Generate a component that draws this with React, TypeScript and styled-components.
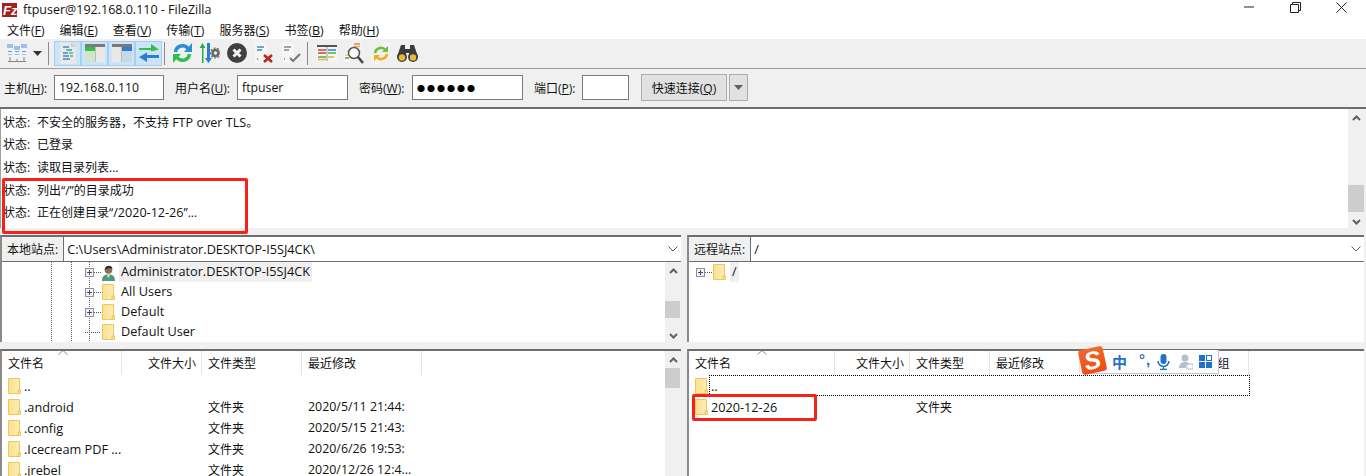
import React from "react";
import styled, { createGlobalStyle } from "styled-components";

const GlobalStyle = createGlobalStyle`
  html, body {
    margin: 0;
    height: 476px;
    overflow: hidden;
    background: #f0f0f0;
  }
  body {
    font-family: "Open Sans", "Noto Sans CJK SC", sans-serif;
    font-size: 12px;
    color: #111;
  }
  * { box-sizing: border-box; }
`;

const Window = styled.div`
  position: relative;
  width: 1366px;
  height: 476px;
  overflow: hidden;
  display: flex;
  flex-direction: column;
`;

/* latin runs are a touch wider than the cjk ones at this size */
const Latin = styled.span`
  font-size: 12.6px;
`;

/* title bar */
const TitleBar = styled.div`
  height: 20px;
  background: #fff;
  display: flex;
  align-items: center;
  padding: 0 2px 0 2px;
  font-size: 12.5px;
`;
const TitleText = styled.span`
  margin-left: 6px;
  flex: 1;
`;
const WinButton = styled.div`
  width: 46px;
  height: 20px;
  display: flex;
  align-items: center;
  justify-content: center;
  margin-top: -5px;
`;

/* menu */
const MenuBar = styled.div`
  height: 19px;
  background: #fff;
  display: flex;
  gap: 15px;
  padding: 2px 0 0 7px;
  align-items: center;
`;
const MenuItem = styled.span`
  font-size: 12px;
  u {
    font-size: 12.6px;
    text-underline-offset: 1px;
  }
`;

/* toolbar */
const Toolbar = styled.div`
  height: 30px;
  background: #f0f0f0;
  border-bottom: 1px solid #a0a0a0;
  display: flex;
  align-items: flex-start;
  padding: 2px 0 0 3px;
`;
const Tool = styled.div<{ $active?: boolean; $w?: number }>`
  width: ${(p) => p.$w ?? 27}px;
  height: 25px;
  display: flex;
  align-items: center;
  justify-content: center;
  flex-shrink: 0;
  background: ${(p) => (p.$active ? "#cce4f7" : "transparent")};
  border: 1px solid ${(p) => (p.$active ? "#a5cff0" : "transparent")};
`;
const ToolSep = styled.div<{ $l: number; $r: number }>`
  width: 1px;
  height: 23px;
  margin: 1px ${(p) => p.$r}px 0 ${(p) => p.$l}px;
  background: #8a8a8a;
  flex-shrink: 0;
`;

/* quick connect */
const QuickBar = styled.div`
  height: 41px;
  background: #f0f0f0;
  border-bottom: 2px solid #6e6e6e;
  display: flex;
  align-items: center;
  padding: 0 0 0 4px;
`;
const QuickLabel = styled.span<{ $w: number }>`
  width: ${(p) => p.$w}px;
  flex-shrink: 0;
  white-space: nowrap;
`;
const Field = styled.div<{ $w: number; $gap: number }>`
  width: ${(p) => p.$w}px;
  height: 25px;
  margin-right: ${(p) => p.$gap}px;
  flex-shrink: 0;
  background: #fff;
  border: 1px solid #7a7a7a;
  padding-left: 4px;
  line-height: 23px;
  font-size: 12.3px;
`;
const Dots = styled.span`
  font-size: 8px;
  letter-spacing: 2px;
  color: #000;
`;
const QuickButton = styled.div`
  width: 86px;
  height: 27px;
  background: #e1e1e1;
  border: 1px solid #adadad;
  display: flex;
  align-items: center;
  justify-content: center;
`;
const QuickArrow = styled.div`
  width: 19px;
  height: 27px;
  margin-left: 2px;
  background: #e1e1e1;
  border: 1px solid #adadad;
  display: flex;
  align-items: center;
  justify-content: center;
`;

/* message log */
const Log = styled.div`
  height: 120px;
  margin-right: 1px;
  background: #fff;
  display: flex;
  border-left: 1px solid #a0a0a0;
`;
const LogLines = styled.div`
  flex: 1;
  padding: 1px 0 0 2px;
`;
const LogLine = styled.div`
  height: 22.7px;
  display: flex;
  align-items: center;
`;
const LogKey = styled.span`
  width: 34px;
  flex-shrink: 0;
`;
const ScrollTrack = styled.div<{ $w: number; $thumbTop: number; $thumbH: number; $bottom?: number }>`
  position: relative;
  width: ${(p) => p.$w}px;
  flex-shrink: 0;
  background: #f0f0f0;
  display: flex;
  flex-direction: column;
  justify-content: space-between;
  align-items: center;
  padding: 6px 0 ${(p) => p.$bottom ?? 3}px;
  &::after {
    content: "";
    position: absolute;
    left: 0;
    width: ${(p) => p.$w - 1}px;
    top: ${(p) => p.$thumbTop}px;
    height: ${(p) => p.$thumbH}px;
    background: #cdcdcd;
  }
`;

/* panes */
const Splitter = styled.div`
  height: 7px;
  background: #f0f0f0;
  flex-shrink: 0;
`;
const PaneRow = styled.div<{ $h: number }>`
  display: flex;
  gap: 6px;
  flex-shrink: 0;
  height: ${(p) => p.$h}px;
`;
const Pane = styled.div<{ $w: number }>`
  width: ${(p) => p.$w}px;
  height: 100%;
  flex-shrink: 0;
  display: flex;
  flex-direction: column;
  background: #fff;
  border-top: 2px solid #6e6e6e;
  border-left: 2px solid #8a8a8a;
  overflow: hidden;
`;
const SiteBar = styled.div`
  height: 25px;
  display: flex;
  align-items: center;
  border-bottom: 1px solid #6e6e6e;
  flex-shrink: 0;
`;
const SiteLabel = styled.div`
  height: 100%;
  padding: 0 5px;
  background: #f0f0f0;
  border-right: 1px solid #6e6e6e;
  display: flex;
  align-items: center;
  white-space: nowrap;
`;
const SitePath = styled.div`
  flex: 1;
  padding-left: 3px;
  font-size: 12.7px;
`;
const Chevron = styled.div`
  width: 17px;
  display: flex;
  justify-content: center;
`;
const PaneBody = styled.div`
  flex: 1;
  display: flex;
  min-height: 0;
`;
const Tree = styled.div<{ $guides?: boolean; $indent: number }>`
  flex: 1;
  padding: 0 0 0 ${(p) => p.$indent}px;
  background-image: ${(p) =>
    p.$guides
      ? `repeating-linear-gradient(#555 0 1px, transparent 1px 2px),
         repeating-linear-gradient(#555 0 1px, transparent 1px 2px),
         repeating-linear-gradient(#555 0 1px, transparent 1px 2px)`
      : "none"};
  background-size: 1px 100%;
  background-position: 49px 0, 69px 0, 87px 0;
  background-repeat: no-repeat;
`;
const TreeRow = styled.div`
  height: 20px;
  display: flex;
  align-items: center;
`;
const Expander = styled.div`
  width: 9px;
  height: 9px;
  border: 1px solid #8e8f8f;
  background: #f4f4f4;
  position: relative;
  flex-shrink: 0;
  &::before {
    content: "";
    position: absolute;
    left: 1px;
    top: 3px;
    width: 5px;
    height: 1px;
    background: #3a4a8a;
  }
  &::after {
    content: "";
    position: absolute;
    left: 3px;
    top: 1px;
    width: 1px;
    height: 5px;
    background: #3a4a8a;
  }
`;
const Connector = styled.div<{ $w: number }>`
  width: ${(p) => p.$w}px;
  height: 1px;
  margin-right: 1px;
  flex-shrink: 0;
  background-image: repeating-linear-gradient(90deg, #555 0 1px, transparent 1px 2px);
`;
const TreeLabel = styled.span<{ $selected?: boolean }>`
  margin-left: 4px;
  padding: 0 2px;
  height: 20px;
  line-height: 19px;
  font-size: 12.7px;
  background: ${(p) => (p.$selected ? "#f0f0f0" : "transparent")};
`;

/* file lists */
const ListArea = styled.div`
  flex: 1;
  min-width: 0;
  position: relative;
`;
const HeaderRow = styled.div`
  height: 24px;
  display: flex;
  flex-shrink: 0;
`;
const HeaderCell = styled.div<{ $w: number; $right?: boolean }>`
  width: ${(p) => p.$w}px;
  height: 24px;
  flex-shrink: 0;
  border-right: 1px solid #e5e5e5;
  padding: 0 5px 0 6px;
  display: flex;
  align-items: center;
  justify-content: ${(p) => (p.$right ? "flex-end" : "flex-start")};
  white-space: nowrap;
  overflow: hidden;
`;
const SortMark = styled.div<{ $left: number }>`
  position: absolute;
  top: -1px;
  left: ${(p) => p.$left}px;
  line-height: 0;
`;
const FileRow = styled.div`
  height: 21px;
  display: flex;
  align-items: center;
  position: relative;
`;
const FocusBox = styled.div`
  position: absolute;
  left: 20px;
  top: 0;
  width: 541px;
  height: 21px;
  border: 1px dotted #000;
`;
const FileCell = styled.div<{ $w: number }>`
  width: ${(p) => p.$w}px;
  flex-shrink: 0;
  padding-left: 6px;
  display: flex;
  align-items: center;
  white-space: nowrap;
  overflow: hidden;
`;
const DateCell = styled(FileCell)`
  font-size: 12.4px;
`;
const FileName = styled.span`
  margin-left: 3px;
  font-size: 12.7px;
`;

/* overlays */
const RedBox = styled.div<{ $x: number; $y: number; $w: number; $h: number }>`
  position: absolute;
  left: ${(p) => p.$x}px;
  top: ${(p) => p.$y}px;
  width: ${(p) => p.$w}px;
  height: ${(p) => p.$h}px;
  border: 3px solid #f8201a;
  border-radius: 2px;
`;
const ImeBar = styled.div`
  position: absolute;
  left: 1091px;
  top: 350px;
  width: 128px;
  height: 24px;
  background: #fff;
  border: 1px solid #c3c7cf;
  border-top: none;
  display: flex;
  align-items: center;
  padding-left: 20px;
  color: #1d72c9;
`;
const ImeLogo = styled.div`
  position: absolute;
  left: 1080px;
  top: 348px;
  width: 25px;
  height: 25px;
  border-radius: 3px;
  background: linear-gradient(#ef6a2a, #f04a12);
  transform: rotate(-12deg);
  color: #fff;
  font: italic 900 25px/24px "Liberation Sans", sans-serif;
  text-align: center;
`;
const ImeZh = styled.span`
  font: 700 15px/1 "Noto Sans CJK SC", sans-serif;
  width: 27px;
`;
const ImePunct = styled.span`
  width: 18px;
  font: 700 15px/1 "Liberation Sans", sans-serif;
  letter-spacing: 1px;
  margin-top: -4px;
`;
const ImeSlot = styled.span<{ $after: number }>`
  display: flex;
  margin-right: ${(p) => p.$after}px;
`;

/* drawn icons */
const Folder = () => (
  <svg width="13" height="16" viewBox="0 0 13 16">
    <defs>
      <linearGradient id="fld" x1="0" x2="1" y1="0" y2="0">
        <stop offset="0" stopColor="#fbe08e" />
        <stop offset="1" stopColor="#fdeeb9" />
      </linearGradient>
    </defs>
    <path d="M.5.5h11v11.5H12.5v3.500H.5z" fill="url(#fld)" stroke="#eec65c" />
    <path d="M10 15.500V12h2.500" fill="#f6d568" stroke="#eec65c" />
  </svg>
);

const UserIcon = () => (
  <svg width="13" height="17" viewBox="0 0 13 17">
    <path d="M0 17c0-5 2-6.500 6.500-6.500S13 12 13 17z" fill="#4f9a76" />
    <path d="M5 11l1.500 3L8 11z" fill="#dfe9e0" />
    <circle cx="6.500" cy="6" r="3.800" fill="#8a6f56" />
    <path d="M2.700 6C2.500 1 10 0 10.500 5 8 3.500 5 4 2.700 6z" fill="#3a2c22" />
  </svg>
);

const ScrollUp = () => (
  <svg width="9" height="6" viewBox="0 0 9 6">
    <path d="M1 5l3.500-3.500L8 5" fill="none" stroke="#606060" strokeWidth="2" />
  </svg>
);
const ScrollDown = () => (
  <svg width="9" height="6" viewBox="0 0 9 6">
    <path d="M1 1l3.500 3.500L8 1" fill="none" stroke="#606060" strokeWidth="2" />
  </svg>
);
const ChevronDown = () => (
  <svg width="10" height="6" viewBox="0 0 10 6">
    <path d="M.5.500L5 5 9.500.500" fill="none" stroke="#606060" />
  </svg>
);
const ChevronUpThin = () => (
  <svg width="10" height="5" viewBox="0 0 10 5">
    <path d="M.5 4.500L5 .5l4.500 4" fill="none" stroke="#909090" />
  </svg>
);
const Caret = ({ color = "#333" }: { color?: string }) => (
  <svg width="9" height="5" viewBox="0 0 9 5">
    <path d="M0 0h9L4.500 5z" fill={color} />
  </svg>
);

const SiteManagerIcon = () => (
  <svg width="20" height="19" viewBox="0 0 20 19">
    <path d="M1 17.500h18M3 13v5M10 14v4M17 13v5" stroke="#7e8c74" fill="none" />
    {[0, 7, 14].map((x) => (
      <g key={x}>
        <rect x={x} y={x === 7 ? 2 : 0} width="6" height="13" fill="#eef2f8" />
        <rect x={x} y={x === 7 ? 2 : 0} width="6" height="4" fill="#9cc0e6" />
        <rect x={x + 1} y="7" width="4" height="1" fill="#6d94c4" />
        <rect x={x + 1} y="10" width="4" height="1" fill="#9cc0e6" />
      </g>
    ))}
  </svg>
);
const LogIcon = () => (
  <svg width="18" height="22" viewBox="0 0 18 22">
    <path d="M1 0h11l5 5v17H1z" fill="#e8e8e8" />
    <path d="M12 0l5 5h-5z" fill="#cfcfcf" />
    <path d="M4 5h6M9 8h4M4 11h5M4 14h6M4 17h7" stroke="#3a8fd0" strokeWidth="1.500" />
    <path d="M10 11h4M7 8h2M11 14h3" stroke="#49b96b" strokeWidth="1.500" />
  </svg>
);
const PaneIcon = ({ side }: { side: "left" | "right" }) => {
  const color = side === "left" ? "#2fc04d" : "#2a7fd4";
  const tint = side === "left" ? "#cfe6cc" : "#c9d8e6";
  return (
    <svg width="20" height="18" viewBox="0 0 20 18">
      <rect width="20" height="18" fill="#e8e8e8" />
      <rect width="20" height="3" fill="#7a7a7a" />
      {side === "left" ? (
        <>
          <rect y="3" width="10" height="4" fill={color} />
          <rect y="7" width="10" height="11" fill={tint} />
          <rect x="10" y="3" width="1" height="15" fill="#bbb" />
        </>
      ) : (
        <>
          <rect x="10" y="3" width="10" height="4" fill={color} />
          <rect x="10" y="7" width="10" height="11" fill={tint} />
          <rect x="9" y="3" width="1" height="15" fill="#bbb" />
        </>
      )}
    </svg>
  );
};
const TransferIcon = () => (
  <svg width="20" height="18" viewBox="0 0 20 18">
    <path d="M0 4h12V0l8 5.500-8 2V6H0z" fill="#2fc04d" />
    <path d="M20 11H8V8.500L0 13l8 5v-4h12z" fill="#2a7fd4" />
  </svg>
);
const RefreshIcon = () => (
  <svg width="21" height="20" viewBox="0 0 21 20">
    <path d="M3.500 9A7 7 0 0 1 16 5.500" fill="none" stroke="#2a8fd4" strokeWidth="3.500" />
    <path d="M20 0v9h-8z" fill="#2a8fd4" />
    <path d="M17.500 11A7 7 0 0 1 5 14.500" fill="none" stroke="#2fc04d" strokeWidth="3.500" />
    <path d="M1 20v-9h8z" fill="#2fc04d" />
  </svg>
);
const ProcessIcon = () => (
  <svg width="21" height="20" viewBox="0 0 21 20">
    <path d="M3 20V5H0.500L3.500 0 6.500 5H4.500V20z" fill="#21b24b" />
    <path d="M8 0v15H5.800L9.500 20l3.500-5H11V0z" fill="#2a7fd4" />
    <circle cx="16.500" cy="10" r="3" fill="none" stroke="#666" strokeWidth="2.500" />
    <circle cx="16.500" cy="10" r="5" fill="none" stroke="#666" strokeWidth="1.200" strokeDasharray="2 1.500" />
  </svg>
);
const CancelIcon = () => (
  <svg width="20" height="20" viewBox="0 0 20 20">
    <circle cx="10" cy="10" r="10" fill="#404040" />
    <path d="M6.500 6.500l7 7M13.500 6.500l-7 7" stroke="#f2f2f2" strokeWidth="3" />
  </svg>
);
const DisconnectIcon = () => (
  <svg width="20" height="20" viewBox="0 0 20 20">
    <path d="M1 0h10l2 2v18H1z" fill="#f6f6f6" />
    <path d="M3 4h7M3 7h5" stroke="#3a8fd0" strokeWidth="1.500" />
    <path d="M3 16h1" stroke="#444" />
    <path d="M10 12l8 7M18 12l-8 7" stroke="#c0211b" strokeWidth="2.500" />
  </svg>
);
const ReconnectIcon = () => (
  <svg width="20" height="20" viewBox="0 0 20 20">
    <path d="M1 0h10l2 2v18H1z" fill="#f6f6f6" />
    <path d="M3 4h7M3 7h5" stroke="#888" strokeWidth="1.500" />
    <path d="M3 16h1" stroke="#444" />
    <path d="M9 15l3 3 7-7" fill="none" stroke="#7d7d7d" strokeWidth="2.200" />
  </svg>
);
const FilterIcon = () => (
  <svg width="20" height="16" viewBox="0 0 20 16">
    <rect width="20" height="16" fill="#f6f6f6" />
    <rect width="20" height="2" fill="#555" />
    <path d="M1 5h8M1 8h8" stroke="#d83a30" strokeWidth="1.500" />
    <path d="M11 5h8" stroke="#2a7fd4" strokeWidth="1.500" />
    <path d="M11 8h8M1 12h8" stroke="#3cb54a" strokeWidth="1.500" />
    <path d="M1 14.500h8M11 12h6" stroke="#e7b21f" strokeWidth="1.500" />
    <path d="M10 2v14" stroke="#999" />
  </svg>
);
const CompareIcon = () => (
  <svg width="20" height="21" viewBox="0 0 20 21">
    <path d="M9 0h8v6H9z" fill="#f6f6f6" />
    <path d="M10 1h6" stroke="#d83a30" />
    <path d="M10 3.500h6" stroke="#e7b21f" strokeWidth="1.500" />
    <path d="M0 10h6v9H0z" fill="#f6f6f6" />
    <path d="M1 12h4" stroke="#e7b21f" />
    <path d="M1 15h4" stroke="#3cb54a" strokeWidth="1.500" />
    <circle cx="10" cy="10" r="5.500" fill="#fff" fillOpacity=".7" stroke="#555" strokeWidth="1.500" />
    <path d="M14 14l5 6" stroke="#444" strokeWidth="2.500" />
  </svg>
);
const SyncIcon = () => (
  <svg width="20" height="21" viewBox="0 0 20 21">
    <rect x="11" y="0" width="8" height="7" fill="#f6f6f6" />
    <rect x="0" y="12" width="8" height="9" fill="#f6f6f6" />
    <path d="M4 10a6 6 0 0 1 10-3.500" fill="none" stroke="#6bbf3a" strokeWidth="2.500" />
    <path d="M17 3v6h-6z" fill="#6bbf3a" />
    <path d="M16 11a6 6 0 0 1-10 3.500" fill="none" stroke="#eeb01c" strokeWidth="2.500" />
    <path d="M3 18v-6h6z" fill="#eeb01c" />
  </svg>
);
const BinocularsIcon = () => (
  <svg width="21" height="18" viewBox="0 0 21 18">
    <path d="M4 1h4v4h5V1h4l4 12H12V9H9v4H0z" fill="#3c3c3c" />
    <circle cx="5" cy="13" r="5" fill="#3c3c3c" />
    <circle cx="16" cy="13" r="5" fill="#3c3c3c" />
    <circle cx="5" cy="13.500" r="3.200" fill="#e5b73b" />
    <circle cx="16" cy="13.500" r="3.200" fill="#e5b73b" />
  </svg>
);
const AppLogo = () => (
  <svg width="15" height="14" viewBox="0 0 15 14">
    <rect width="15" height="14" fill="#a81e1e" />
    <text x="1" y="12" fontFamily="Liberation Sans" fontWeight="700" fontStyle="italic" fontSize="13" fill="#fff">
      Fz
    </text>
  </svg>
);
const MicIcon = () => (
  <svg width="13" height="16" viewBox="0 0 13 16">
    <rect x="3.500" y="0" width="6" height="10" rx="3" fill="#1d72c9" />
    <path d="M1 7a5.500 5.500 0 0 0 11 0M6.500 12.500V15M3 15.500h7" fill="none" stroke="#1d72c9" strokeWidth="1.500" />
  </svg>
);
const ImeUserIcon = () => (
  <svg width="14" height="16" viewBox="0 0 14 16">
    <circle cx="6" cy="4" r="3.500" fill="#b4c0d2" />
    <path d="M0 14c0-4 2-6 6-6s5 2 6 3H7v3z" fill="#b4c0d2" />
    <rect x="8" y="10" width="6" height="5" fill="#fff" stroke="#b4c0d2" />
  </svg>
);
const ImeGrid = () => (
  <svg width="13" height="13" viewBox="0 0 13 13">
    <rect width="6" height="6" fill="#1d72c9" />
    <rect x="7.500" y=".5" width="5" height="5" fill="none" stroke="#1d72c9" />
    <rect y="7" width="6" height="6" fill="#1d72c9" />
    <rect x="7" y="7" width="6" height="6" fill="#1d72c9" />
  </svg>
);

const menus: [string, string][] = [
  ["文件", "F"],
  ["编辑", "E"],
  ["查看", "V"],
  ["传输", "T"],
  ["服务器", "S"],
  ["书签", "B"],
  ["帮助", "H"],
];

const logLines: React.ReactNode[] = [
  <>
    不安全的服务器，不支持 <Latin>FTP over TLS</Latin>。
  </>,
  "已登录",
  "读取目录列表...",
  "列出“/”的目录成功",
  <>
    正在创建目录“<Latin>/2020-12-26</Latin>”...
  </>,
];

const leftFiles = [
  { name: "..", type: "", date: "" },
  { name: ".android", type: "文件夹", date: "2020/5/11 21:44:" },
  { name: ".config", type: "文件夹", date: "2020/5/15 21:43:" },
  { name: ".Icecream PDF ...", type: "文件夹", date: "2020/6/26 19:53:" },
  { name: ".jrebel", type: "文件夹", date: "2020/12/26 12:4..." },
];

const leftCols = [120, 80, 100, 120];
const rightCols = [146, 75, 80, 90, 91, 78];

export default function App() {
  return (
    <Window>
      <GlobalStyle />
      <TitleBar>
        <AppLogo />
        <TitleText>ftpuser@192.168.0.110 - FileZilla</TitleText>
        <WinButton>
          <svg width="11" height="2" viewBox="0 0 11 2">
            <path d="M0 1h10" stroke="#222" />
          </svg>
        </WinButton>
        <WinButton>
          <svg width="11" height="11" viewBox="0 0 11 11">
            <path d="M.5 2.500h8v8h-8zM2.500 2.500v-2h8v8h-2" fill="none" stroke="#222" />
          </svg>
        </WinButton>
        <WinButton>
          <svg width="11" height="11" viewBox="0 0 11 11">
            <path d="M.5.500l10 10M10.500.500l-10 10" stroke="#222" />
          </svg>
        </WinButton>
      </TitleBar>

      <MenuBar>
        {menus.map(([label, key]) => (
          <MenuItem key={key}>
            {label}(<u>{key}</u>)
          </MenuItem>
        ))}
      </MenuBar>

      <Toolbar>
        <Tool>
          <SiteManagerIcon />
        </Tool>
        <Tool $w={15}>
          <Caret />
        </Tool>
        <ToolSep $l={3} $r={5} />
        <Tool $active>
          <LogIcon />
        </Tool>
        <Tool $active>
          <PaneIcon side="left" />
        </Tool>
        <Tool $active>
          <PaneIcon side="right" />
        </Tool>
        <Tool $active>
          <TransferIcon />
        </Tool>
        <ToolSep $l={2} $r={4} />
        <Tool>
          <RefreshIcon />
        </Tool>
        <Tool>
          <ProcessIcon />
        </Tool>
        <Tool>
          <CancelIcon />
        </Tool>
        <Tool>
          <DisconnectIcon />
        </Tool>
        <Tool>
          <ReconnectIcon />
        </Tool>
        <ToolSep $l={3} $r={5} />
        <Tool>
          <FilterIcon />
        </Tool>
        <Tool>
          <CompareIcon />
        </Tool>
        <Tool>
          <SyncIcon />
        </Tool>
        <Tool>
          <BinocularsIcon />
        </Tool>
      </Toolbar>

      <QuickBar>
        <QuickLabel $w={50}>
          主机(<u>H</u>):
        </QuickLabel>
        <Field $w={110} $gap={11}>
          192.168.0.110
        </Field>
        <QuickLabel $w={62}>
          用户名(<u>U</u>):
        </QuickLabel>
        <Field $w={111} $gap={11}>
          ftpuser
        </Field>
        <QuickLabel $w={53}>
          密码(<u>W</u>):
        </QuickLabel>
        <Field $w={111} $gap={11}>
          <Dots>●●●●●●</Dots>
        </Field>
        <QuickLabel $w={48}>
          端口(<u>P</u>):
        </QuickLabel>
        <Field $w={47} $gap={12} />
        <QuickButton>
          <span>
            快速连接(<u>Q</u>)
          </span>
        </QuickButton>
        <QuickArrow>
          <Caret color="#606060" />
        </QuickArrow>
      </QuickBar>

      <Log>
        <LogLines>
          {logLines.map((line, i) => (
            <LogLine key={i}>
              <LogKey>状态:</LogKey>
              <span>{line}</span>
            </LogLine>
          ))}
        </LogLines>
        <ScrollTrack $w={17} $thumbTop={76} $thumbH={27}>
          <ScrollUp />
          <ScrollDown />
        </ScrollTrack>
      </Log>

      <Splitter />

      <PaneRow $h={107}>
        <Pane $w={681}>
          <SiteBar>
            <SiteLabel>本地站点:</SiteLabel>
            <SitePath>C:\Users\Administrator.DESKTOP-I5SJ4CK\</SitePath>
            <Chevron>
              <ChevronDown />
            </Chevron>
          </SiteBar>
          <PaneBody>
            <Tree $guides $indent={83}>
              <TreeRow>
                <Expander />
                <Connector $w={7} />
                <UserIcon />
                <TreeLabel $selected>Administrator.DESKTOP-I5SJ4CK</TreeLabel>
              </TreeRow>
              <TreeRow>
                <Expander />
                <Connector $w={7} />
                <Folder />
                <TreeLabel>All Users</TreeLabel>
              </TreeRow>
              <TreeRow>
                <Expander />
                <Connector $w={7} />
                <Folder />
                <TreeLabel>Default</TreeLabel>
              </TreeRow>
              <TreeRow>
                <Connector $w={16} />
                <Folder />
                <TreeLabel>Default User</TreeLabel>
              </TreeRow>
            </Tree>
            <ScrollTrack $w={16} $thumbTop={39} $thumbH={17}>
              <ScrollUp />
              <ScrollDown />
            </ScrollTrack>
          </PaneBody>
        </Pane>
        <Pane $w={677}>
          <SiteBar>
            <SiteLabel>远程站点:</SiteLabel>
            <SitePath>/</SitePath>
            <Chevron>
              <ChevronDown />
            </Chevron>
          </SiteBar>
          <PaneBody>
            <Tree $indent={7}>
              <TreeRow>
                <Expander />
                <Connector $w={7} />
                <Folder />
                <TreeLabel $selected>/</TreeLabel>
              </TreeRow>
            </Tree>
          </PaneBody>
        </Pane>
      </PaneRow>

      <Splitter />

      <PaneRow $h={127}>
        <Pane $w={681}>
          <PaneBody>
            <ListArea>
              <SortMark $left={56}>
                <ChevronUpThin />
              </SortMark>
              <HeaderRow>
                <HeaderCell $w={leftCols[0]}>文件名</HeaderCell>
                <HeaderCell $w={leftCols[1]} $right>
                  文件大小
                </HeaderCell>
                <HeaderCell $w={leftCols[2]}>文件类型</HeaderCell>
                <HeaderCell $w={leftCols[3]}>最近修改</HeaderCell>
              </HeaderRow>
              {leftFiles.map((f) => (
                <FileRow key={f.name}>
                  <FileCell $w={leftCols[0]}>
                    <Folder />
                    <FileName>{f.name}</FileName>
                  </FileCell>
                  <FileCell $w={leftCols[1]} />
                  <FileCell $w={leftCols[2]}>{f.type}</FileCell>
                  <DateCell $w={leftCols[3]}>{f.date}</DateCell>
                </FileRow>
              ))}
            </ListArea>
            <ScrollTrack $w={16} $thumbTop={17} $thumbH={20} $bottom={0}>
              <ScrollUp />
            </ScrollTrack>
          </PaneBody>
        </Pane>
        <Pane $w={677}>
          <ListArea>
            <SortMark $left={68}>
              <ChevronUpThin />
            </SortMark>
            <HeaderRow>
              <HeaderCell $w={rightCols[0]}>文件名</HeaderCell>
              <HeaderCell $w={rightCols[1]} $right>
                文件大小
              </HeaderCell>
              <HeaderCell $w={rightCols[2]}>文件类型</HeaderCell>
              <HeaderCell $w={rightCols[3]}>最近修改</HeaderCell>
              <HeaderCell $w={rightCols[4]}>权限</HeaderCell>
              <HeaderCell $w={rightCols[5]}>所有者/组</HeaderCell>
            </HeaderRow>
            <FileRow>
              <FocusBox />
              <FileCell $w={rightCols[0]}>
                <Folder />
                <FileName>..</FileName>
              </FileCell>
            </FileRow>
            <FileRow>
              <FileCell $w={rightCols[0]}>
                <Folder />
                <FileName>2020-12-26</FileName>
              </FileCell>
              <FileCell $w={rightCols[1]} />
              <FileCell $w={rightCols[2]}>文件夹</FileCell>
            </FileRow>
          </ListArea>
        </Pane>
      </PaneRow>

      <RedBox $x={2} $y={178} $w={246} $h={56} />
      <RedBox $x={692} $y={394} $w={125} $h={27} />

      <ImeBar>
        <ImeZh>中</ImeZh>
        <ImePunct>°,</ImePunct>
        <ImeSlot $after={9}>
          <MicIcon />
        </ImeSlot>
        <ImeSlot $after={6}>
          <ImeUserIcon />
        </ImeSlot>
        <ImeGrid />
      </ImeBar>
      <ImeLogo>S</ImeLogo>
    </Window>
  );
}
